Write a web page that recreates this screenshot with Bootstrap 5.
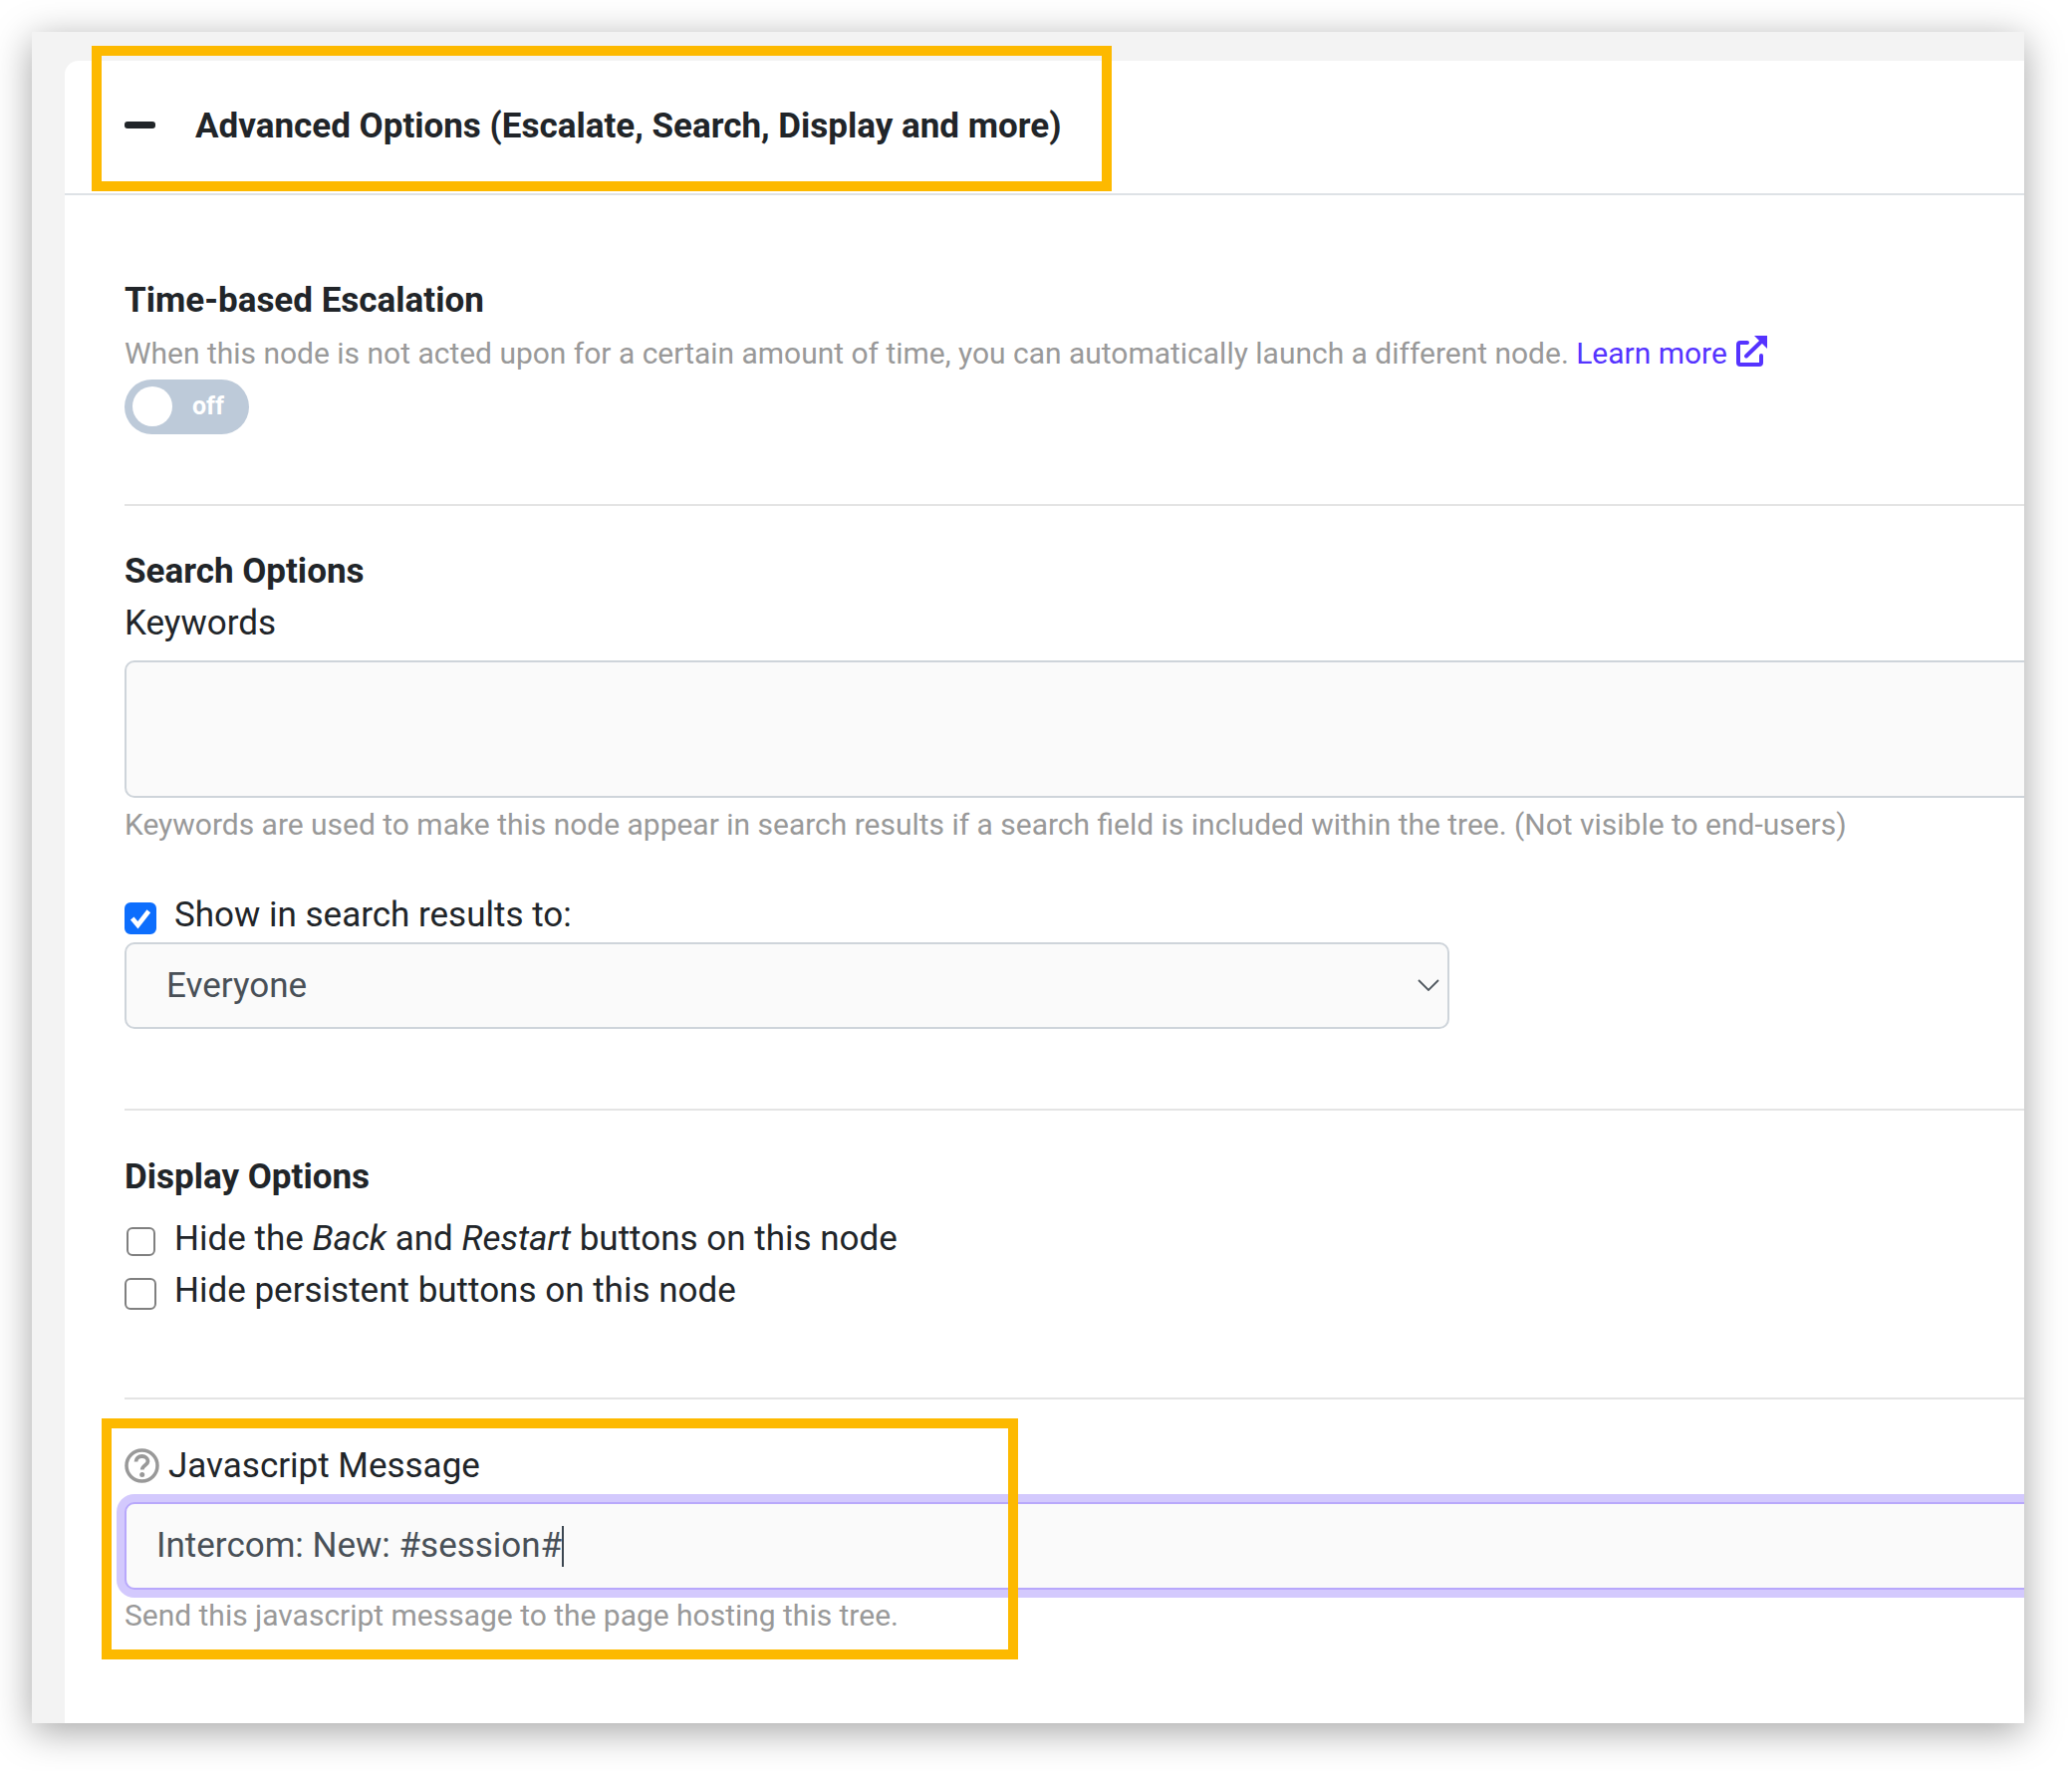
<!DOCTYPE html>
<html lang="en"><head><meta charset="utf-8">
<title>Advanced Options</title>
<link href="https://cdn.jsdelivr.net/npm/bootstrap@5.3.0/dist/css/bootstrap.min.css" rel="stylesheet">
<style>
html,body{height:100%}
body{background:#fff;font-family:Roboto,"Liberation Sans",sans-serif;font-size:35px;line-height:1.5;color:#212529;padding:32px 48px 48px 32px;overflow:hidden}
.app-window{position:relative;height:1698px;background:#f3f3f3;padding:29px 0 0 33px;box-shadow:0 8px 36px rgba(0,0,0,.36)}
.app-panel{height:100%;background:#fff;border-top-left-radius:14px;overflow:hidden}
.adv-header{height:135px;border-bottom:2px solid #dee2e6;padding-left:60px;gap:40px;font-weight:700}
.adv-minus{display:block;width:31px;height:7px;border-radius:3px;background:#212529;margin-top:-5px}
.adv-body{padding:79.5px 0 0 60px}
.sec-title{font-weight:700;margin:0}
.help-txt{font-size:29.97px;color:#999;line-height:45px}
.help-txt a{color:#5533ff;text-decoration:none}
.ext-icon{width:31px;height:31px;vertical-align:-3px;margin-left:9px}
.toggle-pill{width:125px;height:55px;border-radius:28px;background:#bdcad9;color:#fff;font-size:25px;font-weight:700;padding:0 25px 0 8px;margin-top:3.5px}
.toggle-knob{width:40px;height:40px;border-radius:50%;background:#fff}
.sec-rule{margin:70px 0 40px;border:0;border-top:2px solid #e4e4e4;opacity:1}
.sec-rule.rule-b{margin:80px 0 41px}
.sec-rule.rule-c{margin:80.5px 0 41px}
.adv-label{display:block;margin:0}
.app-panel .form-control,.app-panel .form-select{font-size:35px;line-height:52.5px;background-color:#fafafa;border:2px solid #ced4da;border-radius:10px;color:#495057}
.kw-area{width:2000px;height:138px;margin-top:10px;resize:none}
.kw-help{margin-top:4px}
.show-row{margin-top:43px;height:52.5px}
.app-panel .form-check-input{margin:0;flex:none;border-radius:6px;background-color:#fff;border:2.5px solid #808080}
.app-panel .form-check-input:checked{background-color:#0d6efd;border-color:#0d6efd;background-size:100% 100%;background-image:url("data:image/svg+xml,%3csvg xmlns='http://www.w3.org/2000/svg' viewBox='0 0 27 27'%3e%3cpath fill='none' stroke='%23fff' stroke-width='4.500' d='M5.500 13.500 11 20 21.500 6.500'/%3e%3c/svg%3e")}
.chk-big{width:32px;height:32px;margin-top:6px!important}
.chk-small{width:29px;height:29px;margin:4px 2px 0!important}
.app-panel .aud-select{width:1330px;height:86.5px;padding:2px 60px 0 40px;margin-top:1px;background-image:url("data:image/svg+xml,%3csvg xmlns='http://www.w3.org/2000/svg' viewBox='0 0 22 12'%3e%3cpath fill='none' stroke='%2350585f' stroke-width='1.8' d='M1 1 11 11 21 1'/%3e%3c/svg%3e");background-size:22px 12px;background-position:right 8px center}
.chk-row{gap:18px;height:52.5px}
.chk-row.chk-tight{gap:17px;height:51px}
.chk-list{margin-top:11px}
.js-label{gap:9px}
.q-icon{width:35px;height:35px;flex:none;margin-top:-2px}
.caret-wrap{position:relative;margin-top:9px;width:2000px}
.app-panel .js-input{height:88px;padding:0 30px;border-color:#b8a8fb;box-shadow:0 0 0 8px #d3c9fd}
.js-caret{position:absolute;left:439px;top:24px;width:2px;height:41px;background:#3c4650}
.js-help{margin-top:3px}
.note-box{position:absolute;border:10px solid #fdb900;pointer-events:none}
.note-a{left:60px;top:14px;width:1024px;height:146px}
.note-b{left:70px;top:1392px;width:920px;height:242px}
</style></head>
<body>
<div class="app-window">
  <div class="app-panel">
    <div class="adv-header d-flex align-items-center"><span class="adv-minus"></span><span>Advanced Options (Escalate, Search, Display and more)</span></div>
    <div class="adv-body">
      <div class="sec-title">Time-based Escalation</div>
      <div class="help-txt mt-1">When this node is not acted upon for a certain amount of time, you can automatically launch a different node. <a href="#">Learn more<svg class="ext-icon" viewBox="0 0 31 31" fill="none" stroke="#5533ff" stroke-width="4" stroke-linecap="round"><path d="M11 7H4Q2 7 2 9V27Q2 29 4 29H23Q25 29 25 27V20"/><path d="M10 20.500 26 5"/><path d="M18 0H31V13Z" fill="#5533ff" stroke="none"/></svg></a></div>
      <div class="toggle-pill d-flex align-items-center justify-content-between"><span class="toggle-knob"></span><span>off</span></div>
      <hr class="sec-rule">
      <div class="sec-title">Search Options</div>
      <label class="adv-label" for="kw">Keywords</label>
      <textarea id="kw" class="form-control kw-area"></textarea>
      <div class="help-txt kw-help">Keywords are used to make this node appear in search results if a search field is included within the tree. (Not visible to end-users)</div>
      <div class="show-row d-flex align-items-center chk-row"><input class="form-check-input chk-big" type="checkbox" id="s" checked><label for="s">Show in search results to:</label></div>
      <select class="form-select aud-select"><option>Everyone</option></select>
      <hr class="sec-rule rule-b">
      <div class="sec-title">Display Options</div>
      <div class="chk-list">
        <div class="d-flex align-items-center chk-row chk-tight"><input class="form-check-input chk-small" type="checkbox" id="h1"><label for="h1">Hide the <em>Back</em> and <em>Restart</em> buttons on this node</label></div>
        <div class="d-flex align-items-center chk-row"><input class="form-check-input chk-big" type="checkbox" id="h2"><label for="h2">Hide persistent buttons on this node</label></div>
      </div>
      <hr class="sec-rule rule-c">
      <div class="d-flex align-items-center js-label"><svg class="q-icon" viewBox="0 0 35 35" fill="none" stroke="#999"><circle cx="17.500" cy="17.500" r="15.500" stroke-width="3.500"/><path d="M11.500 13.500c0-3.500 2.700-5.500 6-5.500s6 2 6 5c0 4-5.800 4-5.800 8.500" stroke-width="3.800"/><circle cx="17.700" cy="26.500" r="2.500" fill="#999" stroke="none"/></svg><label for="js">Javascript Message</label></div>
      <div class="caret-wrap"><input id="js" class="form-control js-input" type="text" value="Intercom: New: #session#"><span class="js-caret"></span></div>
      <div class="help-txt js-help">Send this javascript message to the page hosting this tree.</div>
    </div>
  </div>
  <div class="note-box note-a"></div>
  <div class="note-box note-b"></div>
</div>
<script src="https://cdn.jsdelivr.net/npm/bootstrap@5.3.0/dist/js/bootstrap.bundle.min.js"></script>
</body></html>
